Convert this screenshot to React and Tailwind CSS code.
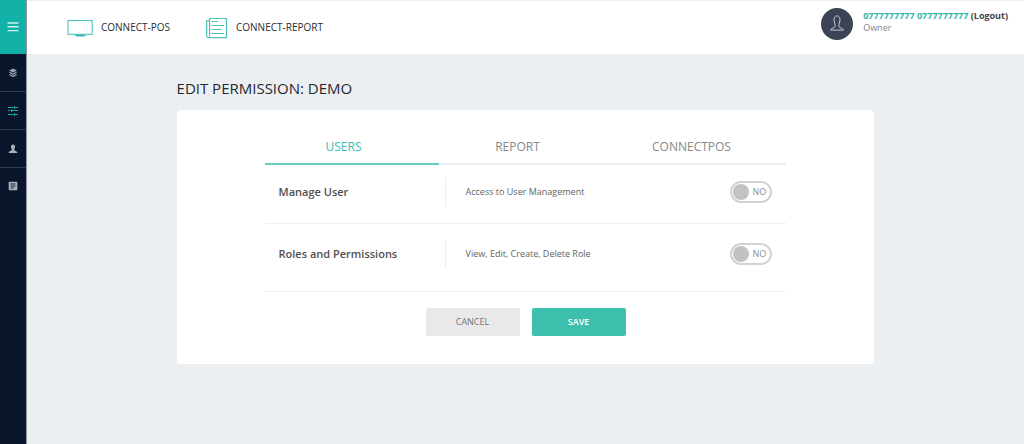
import { useState } from "react";

const TABS = [
  {
    id: "users",
    label: "USERS",
    permissions: [
      { id: "manage-user", name: "Manage User", detail: "Access to User Management", space: "pt-[13px] pb-[17px]" },
      { id: "roles", name: "Roles and Permissions", detail: "View, Edit, Create, Delete Role", space: "pt-4 pb-[23px]" },
    ],
  },
  { id: "report", label: "REPORT", permissions: [] },
  { id: "connectpos", label: "CONNECTPOS", permissions: [] },
];

function LayersIcon() {
  return (
    <svg className="size-[10px]" viewBox="0 0 10 10" fill="#98a1ad" aria-hidden="true">
      <path d="M5 0.6 9 2.5 5 4.6 1 2.5Z" />
      <path d="M2 3.8 1 4.6 5 6.9 9 4.6 8 3.8 5 5.5Z" />
      <path d="M2 6.1 1 6.9 5 9.2 9 6.9 8 6.1 5 7.8Z" />
    </svg>
  );
}

function SlidersIcon() {
  return (
    <svg className="size-[10px]" viewBox="0 0 10 10" stroke="#1fa99f" strokeWidth="1" fill="none" aria-hidden="true">
      <path d="M0 1.5H5.5M6.5 0V3M6.5 1.5H10M0 4.5H2M3.5 3V6M3.5 4.5H10M0 8.5H5.5M6.5 7V10M6.5 8.5H10" />
    </svg>
  );
}

function PersonIcon() {
  return (
    <svg className="size-[10px]" viewBox="0 0 10 10" fill="#a9b1bd" aria-hidden="true">
      <path d="M5 0.6C6.5 0.6 7.1 1.6 7 3.1 6.9 4.4 6.2 5.2 6.2 6.1 6.2 7.2 9.2 6.7 9.4 9.1H0.6C0.8 6.7 3.8 7.2 3.8 6.1 3.8 5.2 3.1 4.4 3 3.1 2.9 1.6 3.5 0.6 5 0.6Z" />
    </svg>
  );
}

function ListIcon() {
  return (
    <svg className="size-[10px]" viewBox="0 0 10 10" aria-hidden="true">
      <rect x="0.7" y="0.7" width="8.6" height="8.6" rx="0.8" fill="#a9b1bd" />
      <path d="M2.5 3H7.5M2.5 5H7.5M2.5 7H5.8" stroke="#0a162b" strokeWidth="0.9" />
    </svg>
  );
}

function MonitorIcon() {
  return (
    <svg className="h-[18px] w-[26px]" viewBox="0 0 26 18" fill="none" aria-hidden="true">
      <rect x="1" y="1.5" width="24.2" height="13.8" stroke="#50c3b9" strokeWidth="1.1" />
      <path d="M7 15.7H19.5V16.4H17.5V17.5H9V16.4H7Z" fill="#2fb5aa" />
    </svg>
  );
}

function ReportIcon() {
  return (
    <svg className="h-[22px] w-[22px]" viewBox="0 0 22 22" fill="none" stroke="#4dc3b8" strokeWidth="1.2" aria-hidden="true">
      <path d="M3.6 18.5V1.5H20.5V20.7H2.3A1.6 1.6 0 0 1 0.7 19V3.8H3.4" />
      <path d="M3.6 18.5Q3.6 20.7 2.3 20.7" strokeWidth="1" />
      <path d="M5.5 4.5H12M5.5 8.5H18M5.5 12.5H15.5M5.5 16.5H18" />
    </svg>
  );
}

function AvatarIcon() {
  return (
    <svg className="h-[17px] w-4" viewBox="0 0 16 17" fill="none" stroke="#c3c9d1" strokeWidth="1" aria-hidden="true">
      <path d="M8 0.9C10.3 0.9 11.1 2.8 11 5 10.9 7.3 9.8 9 9.8 10.8 9.8 13.4 14.2 12.8 14.5 15.1H1.5C1.8 12.8 6.2 13.4 6.2 10.8 6.2 9 5.1 7.3 5 5 4.9 2.8 5.7 0.9 8 0.9Z" />
    </svg>
  );
}

const NAV = [
  { label: "Products", Icon: LayersIcon },
  { label: "Settings", Icon: SlidersIcon },
  { label: "Users", Icon: PersonIcon },
  { label: "Reports", Icon: ListIcon },
];

function Sidebar() {
  return (
    <aside className="w-[27px] shrink-0 border-r border-[#8d93a3] bg-[#0a162b]">
      <button type="button" aria-label="Menu" className="flex h-[54px] w-full items-center justify-center bg-[#12b2a8]">
        <svg className="h-[10px] w-3" viewBox="0 0 12 10" stroke="#d4f4ee" strokeWidth="1.4" aria-hidden="true">
          <path d="M0.5 1H11.5M0.5 4.8H11.5M0.5 8.6H11.5" />
        </svg>
      </button>
      <nav aria-label="Main">
        {NAV.map(({ label, Icon }) => (
          <a
            key={label}
            href="#"
            aria-label={label}
            className="flex h-[38px] items-center justify-center border-b border-[#2f3b4f] last:h-9 last:border-b-0"
          >
            <Icon />
          </a>
        ))}
      </nav>
    </aside>
  );
}

function Header() {
  return (
    <header className="flex h-[54px] items-center justify-between border-t border-[#eeeeee] bg-white pr-4 pl-10">
      <nav aria-label="Applications" className="flex items-center gap-9 text-[10px] font-medium text-[#272d33]">
        <a href="#" className="flex items-center gap-2">
          <MonitorIcon />
          CONNECT-POS
        </a>
        <a href="#" className="flex items-center gap-2">
          <ReportIcon />
          CONNECT-REPORT
        </a>
      </nav>
      <div className="flex items-center gap-2.5 pb-2">
        <div className="flex size-8 items-center justify-center rounded-full bg-[#3b4354]">
          <AvatarIcon />
        </div>
        <div className="pb-1 text-[9px] leading-3">
          <p className="font-bold text-[#444444]">
            <span className="text-[#2db5ab]">0777777777 0777777777</span> <a href="#">(Logout)</a>
          </p>
          <p className="text-[#7b868c]">Owner</p>
        </div>
      </div>
    </header>
  );
}

function PermissionRow({ permission, checked, onChange }) {
  return (
    <li className={`flex items-center border-b border-[#efefef] px-3.5 ${permission.space}`}>
      <label htmlFor={permission.id} className="w-[166px] shrink-0 text-[11px] font-semibold text-[#4f4f4f]">
        {permission.name}
      </label>
      <p className="flex h-7 flex-1 items-center border-l border-[#ececec] pl-5 text-[9px] text-[#606564]">
        {permission.detail}
      </p>
      <label
        className={`flex h-[22px] w-[42px] cursor-pointer items-center gap-[3px] rounded-full border-2 px-px text-[9px] ${
          checked ? "flex-row-reverse border-[#3dbfae] text-[#3dbfae]" : "border-[#d2d2d2] text-[#8a8f90]"
        }`}
      >
        <input
          id={permission.id}
          type="checkbox"
          checked={checked}
          onChange={onChange}
          className="size-4 cursor-pointer appearance-none rounded-full bg-[#c2c2c2] checked:bg-[#3dbfae]"
        />
        {checked ? "YES" : "NO"}
      </label>
    </li>
  );
}

export default function App() {
  const [activeId, setActiveId] = useState("users");
  const [granted, setGranted] = useState({});
  const active = TABS.find((tab) => tab.id === activeId);

  return (
    <div className="flex min-h-screen bg-[#ebeff2] font-['Open_Sans',sans-serif]">
      <Sidebar />
      <div className="min-w-0 flex-1">
        <Header />
        <main className="mx-[15%] pt-[23px] pb-20">
          <h1 className="text-[15px] leading-[22px] font-medium text-[#26282c]">EDIT PERMISSION: DEMO</h1>
          <form
            className="mt-[11px] rounded bg-white px-22 pt-5 pb-7"
            onSubmit={(event) => event.preventDefault()}
          >
            <div role="tablist" className="grid grid-cols-3">
              {TABS.map((tab) => (
                <button
                  key={tab.id}
                  type="button"
                  role="tab"
                  aria-selected={tab.id === activeId}
                  onClick={() => setActiveId(tab.id)}
                  className={`h-[35px] border-b-2 pr-4 text-[12px] ${
                    tab.id === activeId ? "border-[#6accc1] text-[#3dbdb1]" : "border-[#e9f2f1] text-[#858989]"
                  }`}
                >
                  {tab.label}
                </button>
              ))}
            </div>
            <ul>
              {active.permissions.map((permission) => (
                <PermissionRow
                  key={permission.id}
                  permission={permission}
                  checked={Boolean(granted[permission.id])}
                  onChange={(event) => setGranted({ ...granted, [permission.id]: event.target.checked })}
                />
              ))}
            </ul>
            <div className="mt-4 flex justify-center gap-3 text-[9px] font-medium">
              <button type="button" className="h-7 w-[94px] rounded-xs bg-[#e9e9e9] text-[#747474]">
                CANCEL
              </button>
              <button type="submit" className="h-7 w-[94px] rounded-xs bg-[#3dbfae] font-semibold text-white">
                SAVE
              </button>
            </div>
          </form>
        </main>
      </div>
    </div>
  );
}
